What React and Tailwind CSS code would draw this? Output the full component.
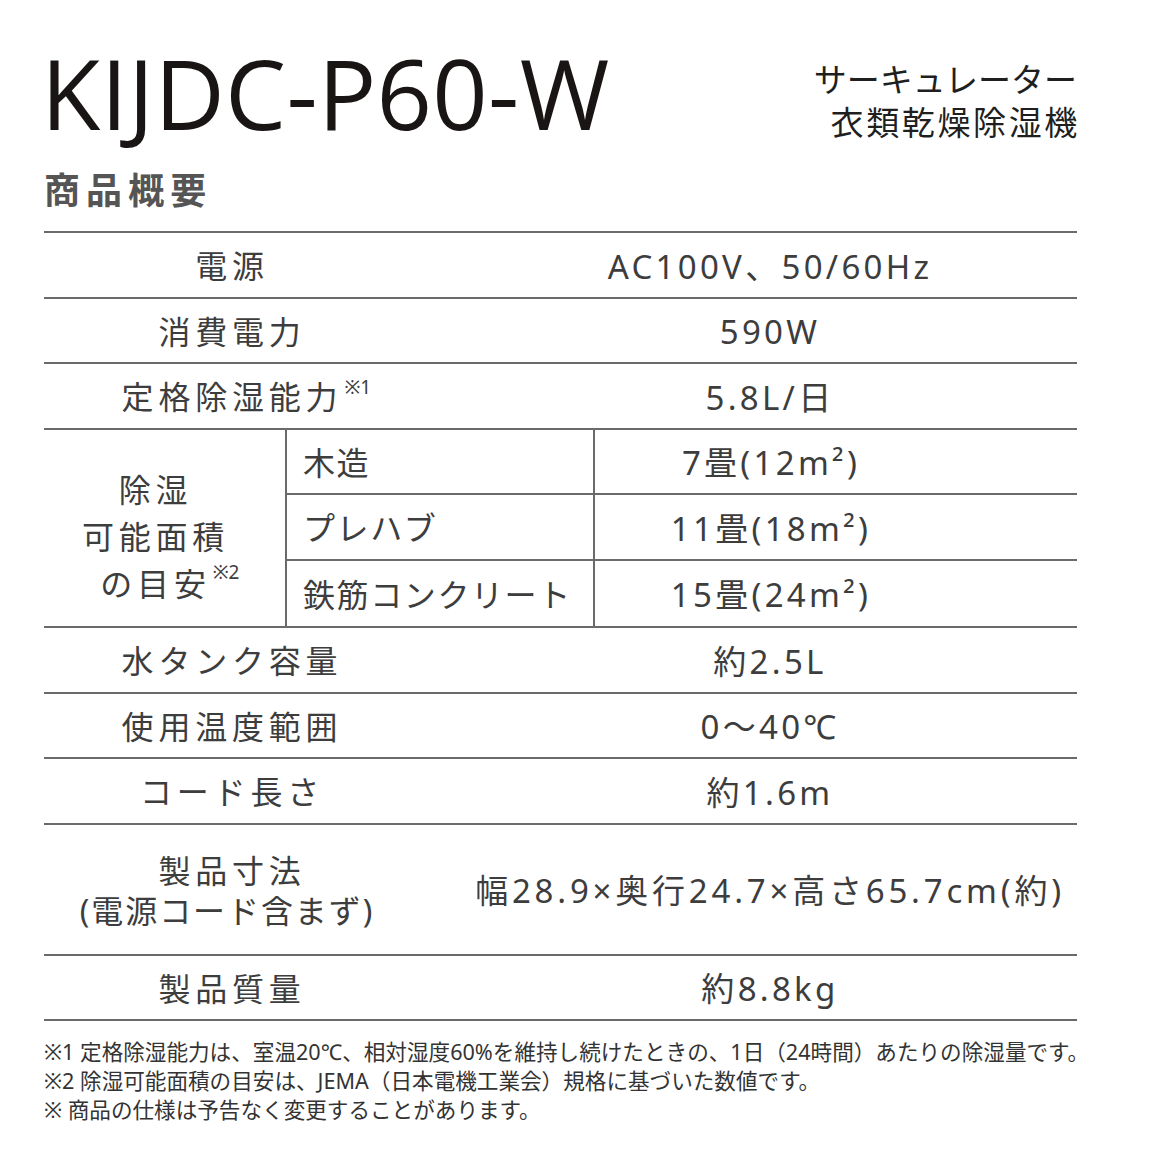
const jp = { fontFamily: '"Noto Sans", "Noto Sans CJK JP", sans-serif' };

const Row = ({ label, value, tall }) => (
  <div className={`flex border-b-2 border-[#6a6a6a] ${tall ? 'h-[131px]' : 'h-[65.5px]'}`}>
    <div className="w-[376px] flex items-center justify-center text-center text-[32px] leading-[40px] tracking-[0.15em] pt-[3px]">
      {label}
    </div>
    <div className="flex-1 flex items-center justify-center pl-[43px] text-[33px] tracking-[0.1em] pt-[3px]">{value}</div>
  </div>
);

// superscript note mark, kept out of the centering
const Note = ({ children, text }) => (
  <span className="relative">
    {text}
    <span className="absolute left-full top-[1px] ml-[2px] text-[19px] leading-none tracking-normal whitespace-nowrap">
      {children}
    </span>
  </span>
);

const App = () => {
  const sub = [
    ['木造', '7畳(12m²)'],
    ['プレハブ', '11畳(18m²)'],
    ['鉄筋コンクリート', '15畳(24m²)'],
  ];

  return (
    <div className="w-[1156px] h-[1156px] bg-white text-[#3d3d3d] pl-[44px] pt-[44px]" style={jp}>
      <div className="w-[1033px] flex justify-between items-start">
        <h1 className="text-[97px] leading-none font-medium text-[#1a1515] -ml-[3px] tracking-[0.003em]" style={{ fontFamily: '"Open Sans", sans-serif' }}>
          KIJDC-P60-W
        </h1>
        <div className="text-right text-[33px] leading-[43px] text-[#1f1f1f] pt-[14px]">
          <div>サーキュレーター</div>
          <div className="tracking-[0.08em] -mr-[3px]">衣類乾燥除湿機</div>
        </div>
      </div>

      <h2 className="text-[36px] font-bold text-[#555] tracking-[0.17em] mt-[25px] leading-[44px]">商品概要</h2>

      <div className="w-[1033px] mt-[18px] border-t-2 border-[#6a6a6a]">
        <Row label="電源" value="AC100V、50/60Hz" />
        <Row label="消費電力" value="590W" />
        <Row label={<Note text="定格除湿能力">※1</Note>} value="5.8L/日" />

        <div className="flex border-b-2 border-[#6a6a6a]">
          <div className="w-[241px] flex items-center justify-center text-center text-[32px] leading-[47px] tracking-[0.15em] pt-[18px] pr-[18px]">
            <div>
              <div>除湿</div>
              <div>可能面積</div>
              <div><Note text="の目安">※2</Note></div>
            </div>
          </div>
          <div className="flex-1 border-l-2 border-[#6a6a6a]">
            {sub.map(([k, v], i) => (
              <div key={k} className={`flex h-[65.5px] ${i < 2 ? 'border-b-2 border-[#6a6a6a]' : ''}`}>
                <div className="w-[306px] flex items-center pl-[16px] text-[32px] tracking-[0.05em] pt-[3px]">{k}</div>
                <div className="flex-1 border-l-2 border-[#6a6a6a] flex items-center justify-center pr-[130px] text-[33px] tracking-[0.1em] pt-[3px]">
                  {v}
                </div>
              </div>
            ))}
          </div>
        </div>

        <Row label="水タンク容量" value="約2.5L" />
        <Row label="使用温度範囲" value="0～40℃" />
        <Row label="コード長さ" value="約1.6m" />
        <Row
          tall
          label={
            <span>
              製品寸法
              <br />
              <span className="tracking-[0.06em] -ml-[10px]">(電源コード含まず)</span>
            </span>
          }
          value={<span className="tracking-[0.115em]">幅28.9×奥行24.7×高さ65.7cm(約)</span>}
        />
        <Row label="製品質量" value="約8.8kg" />
      </div>

      <div className="mt-[16px] text-[21.6px] leading-[29px] text-[#333]">
        <p>※1 定格除湿能力は、室温20℃、相対湿度60%を維持し続けたときの、1日（24時間）あたりの除湿量です。</p>
        <p>※2 除湿可能面積の目安は、JEMA（日本電機工業会）規格に基づいた数値です。</p>
        <p>※ 商品の仕様は予告なく変更することがあります。</p>
      </div>
    </div>
  );
};

export default App;
